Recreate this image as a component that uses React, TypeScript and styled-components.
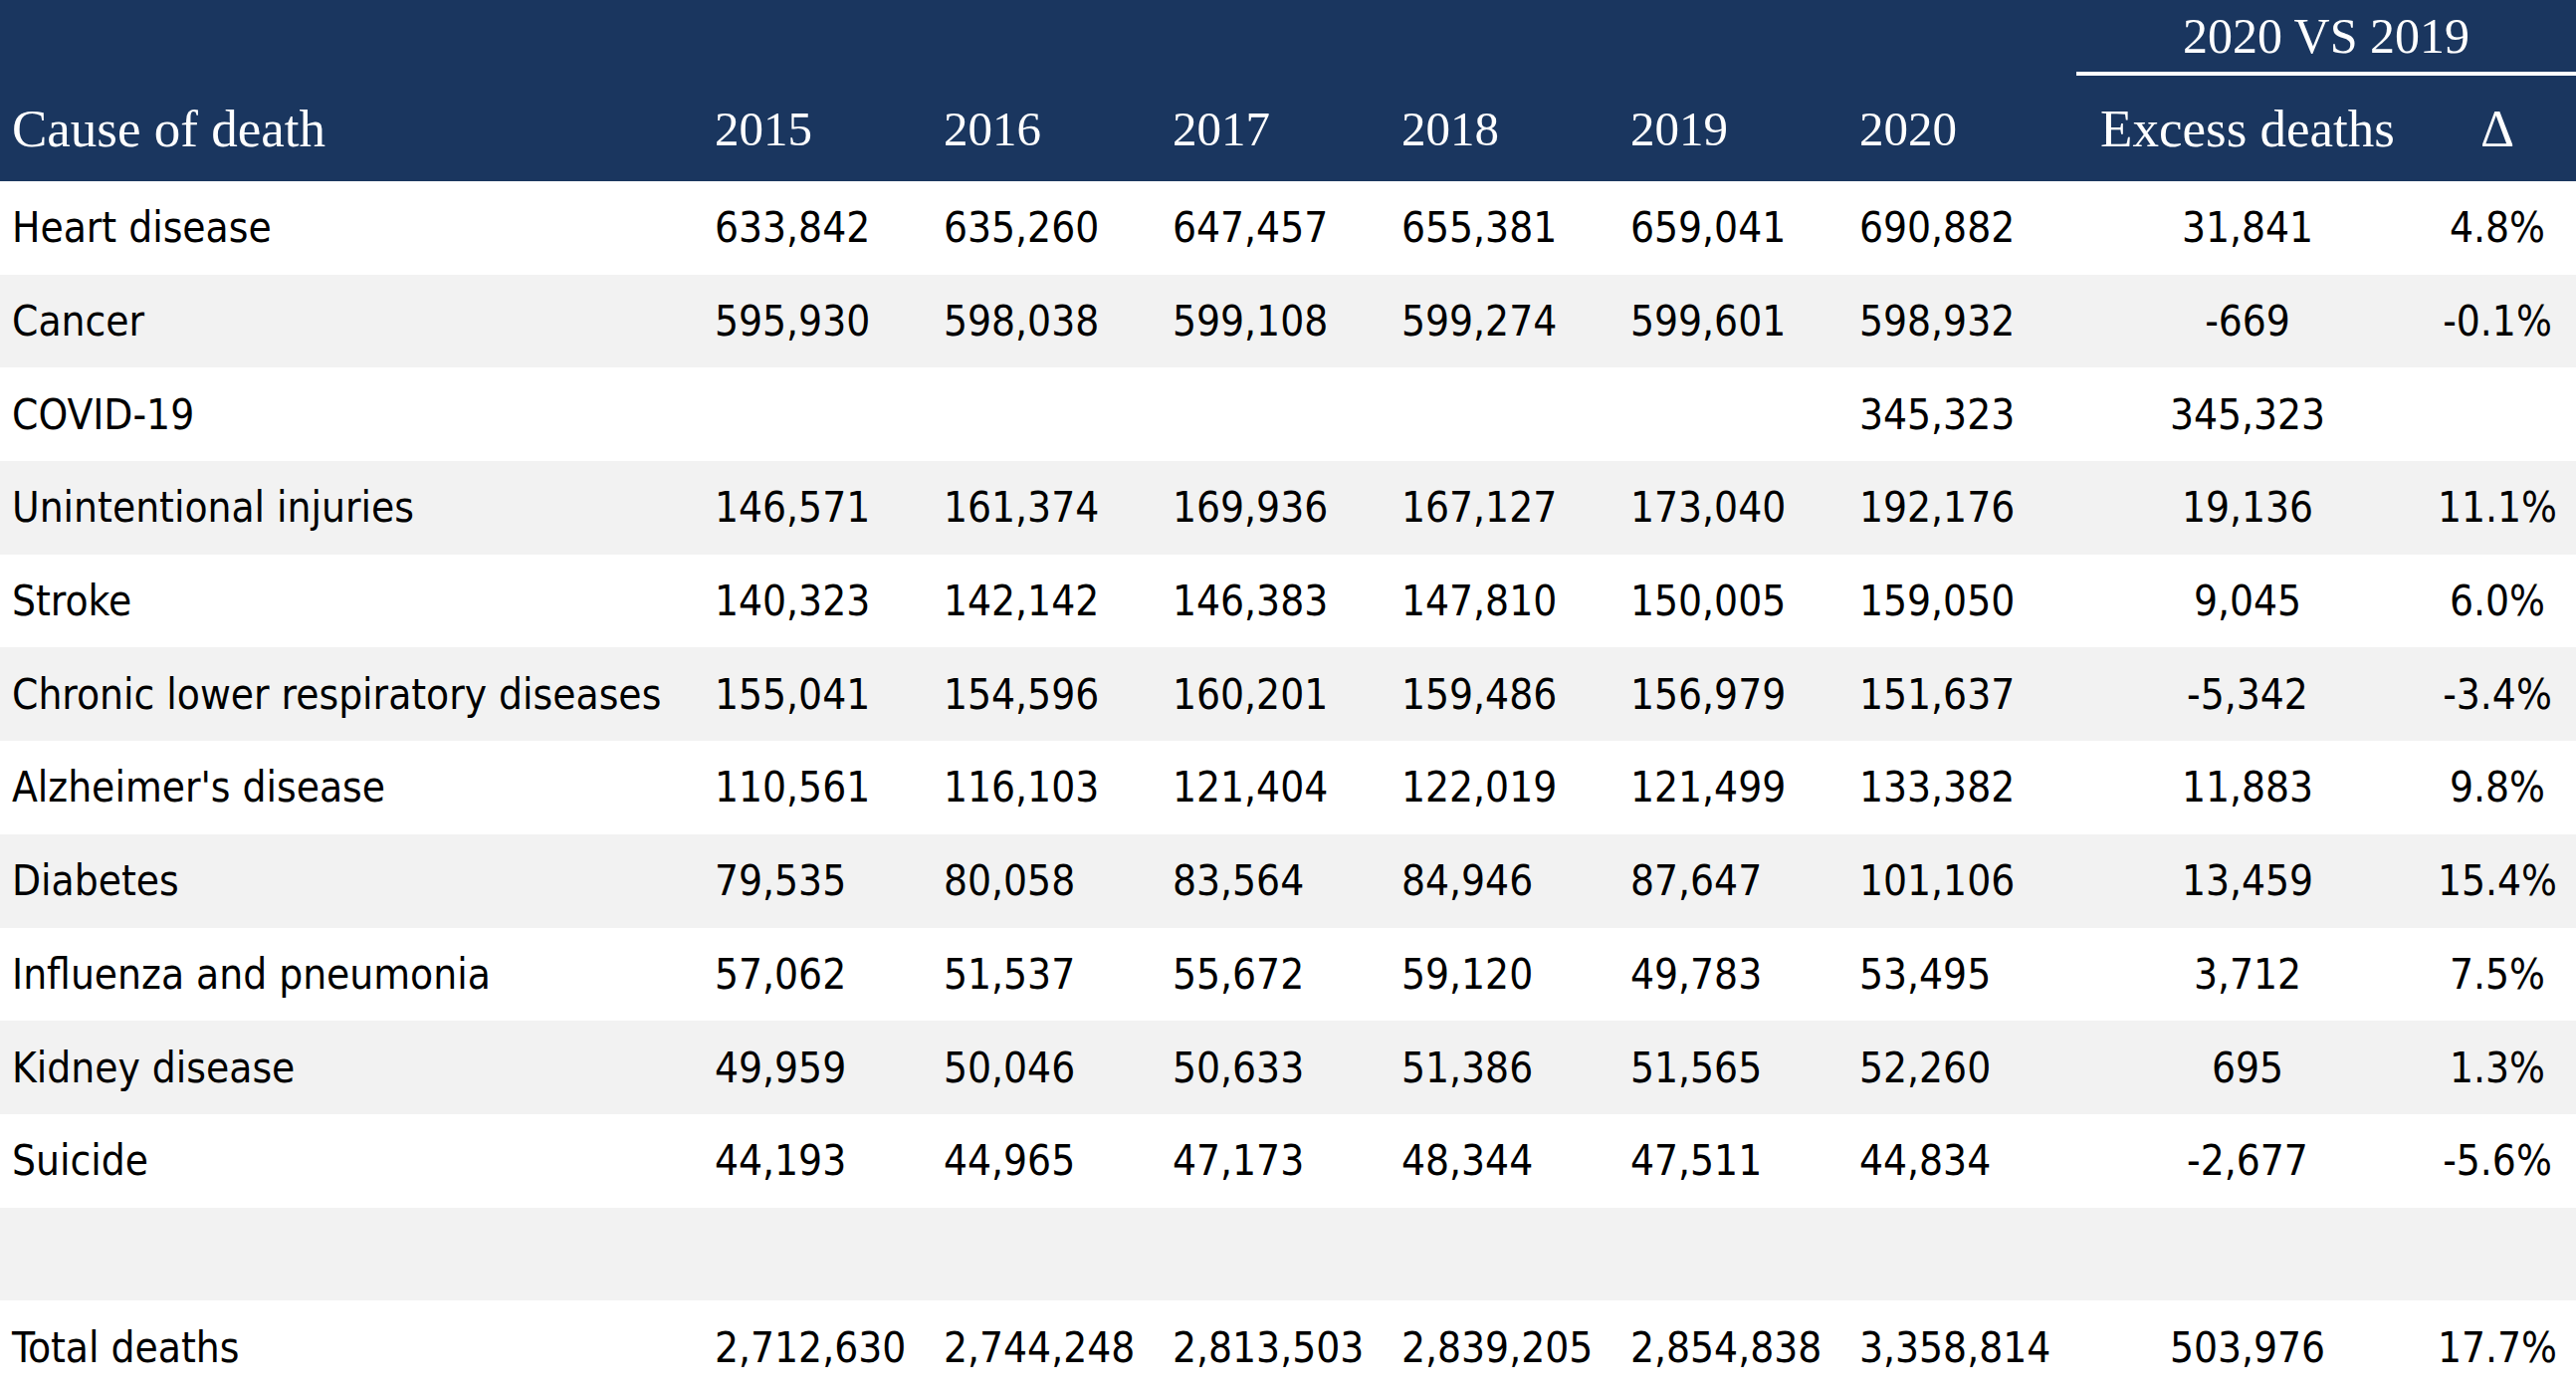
import React from "react";
import styled, { createGlobalStyle } from "styled-components";

const GlobalStyle = createGlobalStyle`
    html, body {
        margin: 0;
        padding: 0;
        background: #ffffff;
    }
`

const COLS = "706px repeat(6, 230px) 344px 158px"

const Table = styled.div`
    width: 2588px;
    display: flex;
    flex-direction: column;
    font-family: "DejaVu Sans Condensed", "Liberation Sans", sans-serif;
    color: #000000;
`

const Head = styled.div`
    height: 182px;
    background: #1a365f;
    display: grid;
    grid-template-columns: ${COLS};
    grid-template-rows: 72px 4px 106px;
    color: #ffffff;
    font-family: "Liberation Serif", "DejaVu Serif", serif;
`

const GroupTitle = styled.div`
    grid-column: 8 / span 2;
    grid-row: 1;
    display: flex;
    align-items: center;
    justify-content: center;
    font-size: 50px;
`

const GroupLine = styled.div`
    grid-column: 8 / span 2;
    grid-row: 2;
    background: #ffffff;
`

const HeadCell = styled.div<{ $align?: string; $size?: number }>`
    grid-row: 3;
    display: flex;
    align-items: center;
    justify-content: ${p => p.$align || "flex-start"};
    padding: 0 12px;
    font-size: ${p => p.$size || 53}px;
    white-space: nowrap;
`

const Row = styled.div<{ $shade?: boolean }>`
    height: 93.7px;
    display: grid;
    grid-template-columns: ${COLS};
    background: ${p => (p.$shade ? "#f2f2f2" : "#ffffff")};
`

const Cell = styled.div<{ $align?: string }>`
    display: flex;
    align-items: center;
    justify-content: ${p => p.$align || "flex-start"};
    padding: 0 12px;
    font-size: 42px;
    white-space: nowrap;
`

type Line = [string, string[], string, string]

const rows: Line[] = [
    ["Heart disease", ["633,842", "635,260", "647,457", "655,381", "659,041", "690,882"], "31,841", "4.8%"],
    ["Cancer", ["595,930", "598,038", "599,108", "599,274", "599,601", "598,932"], "-669", "-0.1%"],
    ["COVID-19", ["", "", "", "", "", "345,323"], "345,323", ""],
    ["Unintentional injuries", ["146,571", "161,374", "169,936", "167,127", "173,040", "192,176"], "19,136", "11.1%"],
    ["Stroke", ["140,323", "142,142", "146,383", "147,810", "150,005", "159,050"], "9,045", "6.0%"],
    ["Chronic lower respiratory diseases", ["155,041", "154,596", "160,201", "159,486", "156,979", "151,637"], "-5,342", "-3.4%"],
    ["Alzheimer's disease", ["110,561", "116,103", "121,404", "122,019", "121,499", "133,382"], "11,883", "9.8%"],
    ["Diabetes", ["79,535", "80,058", "83,564", "84,946", "87,647", "101,106"], "13,459", "15.4%"],
    ["Influenza and pneumonia", ["57,062", "51,537", "55,672", "59,120", "49,783", "53,495"], "3,712", "7.5%"],
    ["Kidney disease", ["49,959", "50,046", "50,633", "51,386", "51,565", "52,260"], "695", "1.3%"],
    ["Suicide", ["44,193", "44,965", "47,173", "48,344", "47,511", "44,834"], "-2,677", "-5.6%"],
]

const total: Line = ["Total deaths", ["2,712,630", "2,744,248", "2,813,503", "2,839,205", "2,854,838", "3,358,814"], "503,976", "17.7%"]

const years = ["2015", "2016", "2017", "2018", "2019", "2020"]

const DataRow = ({ line, shade }: { line: Line; shade: boolean }) => (
    <Row $shade={shade}>
        <Cell>{line[0]}</Cell>
        {line[1].map((v, i) => (
            <Cell key={i}>{v}</Cell>
        ))}
        <Cell $align="center">{line[2]}</Cell>
        <Cell $align="center">{line[3]}</Cell>
    </Row>
)

export default function App() {
    return (
        <>
            <GlobalStyle />
            <Table>
                <Head>
                    <GroupTitle>2020 VS 2019</GroupTitle>
                    <GroupLine />
                    <HeadCell>Cause of death</HeadCell>
                    {years.map(y => (
                        <HeadCell key={y} $size={49}>{y}</HeadCell>
                    ))}
                    <HeadCell $align="center">Excess deaths</HeadCell>
                    <HeadCell $align="center">Δ</HeadCell>
                </Head>
                {rows.map((r, i) => (
                    <DataRow key={r[0]} line={r} shade={i % 2 === 1} />
                ))}
                <Row $shade />
                <DataRow line={total} shade={false} />
            </Table>
        </>
    )
}
